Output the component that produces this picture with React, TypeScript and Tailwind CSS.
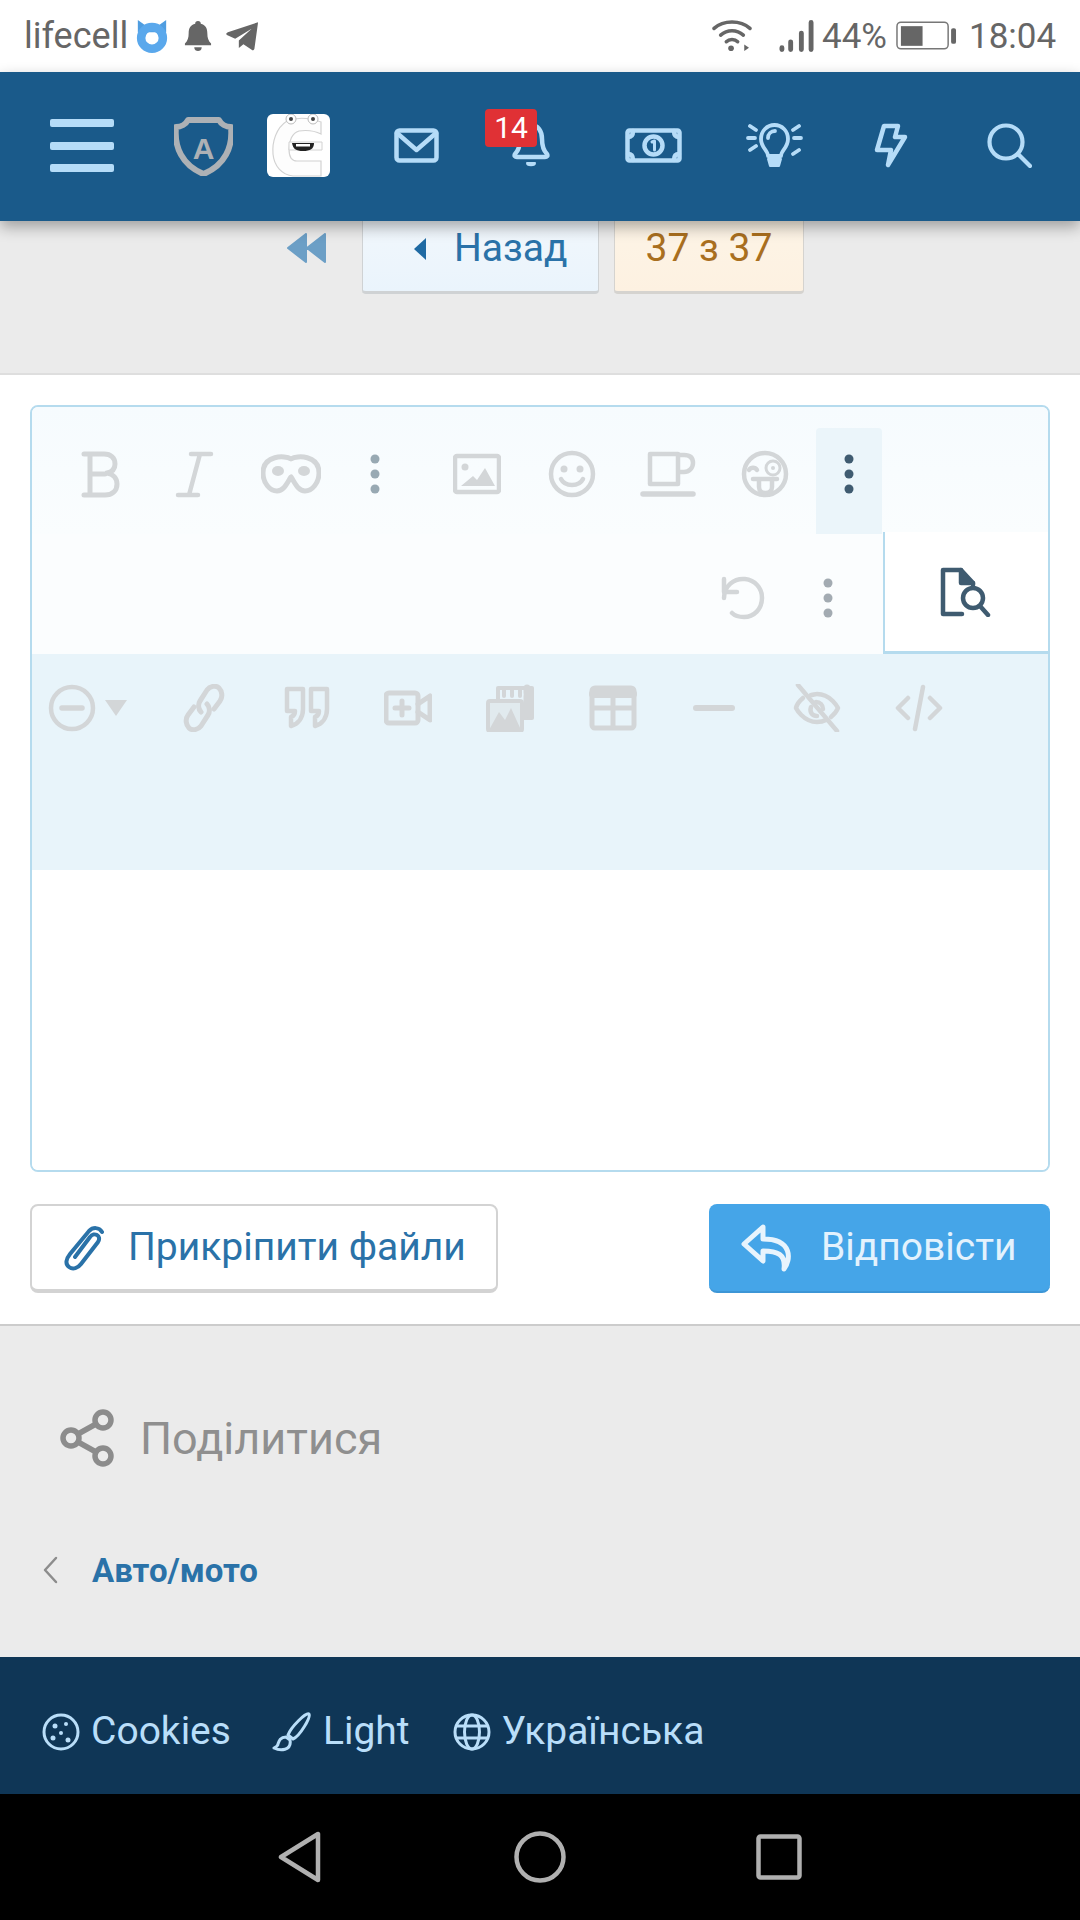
import React from "react";

const G = "#d3d6d8";
const N = "#b5dcf8";

function S({ c = "", v = "0 0 48 48", children, stroke = G, sw = 4 }: { c?: string; v?: string; children: React.ReactNode; stroke?: string; sw?: number }) {
  return (
    <svg className={"shrink-0 " + c} viewBox={v} fill="none" stroke={stroke} strokeWidth={sw} strokeLinecap="round" strokeLinejoin="round">
      {children}
    </svg>
  );
}

function Dots({ c = "", color }: { c?: string; color: string }) {
  return (
    <svg className={"shrink-0 " + c} viewBox="0 0 48 48" fill={color}>
      <circle cx="24" cy="9" r="4.5" />
      <circle cx="24" cy="24" r="4.5" />
      <circle cx="24" cy="39" r="4.5" />
    </svg>
  );
}

const T = "w-[48px] h-[48px] mt-[43px]";
const R = "w-[48px] h-[48px]";

export default function App() {
  return (
    <div className="w-[1080px] h-[1920px] flex flex-col overflow-hidden bg-white font-['Roboto',sans-serif]">
      {/* status bar */}
      <div className="h-[72px] shrink-0 flex items-center bg-white text-[35px] text-[#666]">
        <span className="ml-[24px] w-[104px] text-[36px] leading-none whitespace-nowrap">lifecell</span>
        <svg className="w-[34px] h-[34px] ml-[7px] shrink-0" viewBox="0 0 36 36">
          <path d="M3 1l7 5h16l7-5v13H3z" fill="#4f9de0" />
          <circle cx="18" cy="20" r="11.500" fill="none" stroke="#5aa8ec" strokeWidth="9" />
        </svg>
        <svg className="w-[28px] h-[32px] ml-[15px] shrink-0" viewBox="0 0 30 34" fill="#666">
          <path d="M15 1c2 0 3 1 3 3 5 1 7 5 7 10 0 5 1 8 4 11v2H1v-2c3-3 4-6 4-11 0-5 2-9 7-10 0-2 1-3 3-3z" />
          <path d="M11 29h8c0 3-2 4-4 4s-4-1-4-4z" />
        </svg>
        <svg className="w-[33px] h-[30px] ml-[14px] shrink-0" viewBox="0 0 36 32" fill="#666">
          <path d="M35 1L31 30c-1 2-2 2-3 1l-9-6-5 4v-8L28 8 10 19 1 15c-1-1-1-2 1-3z" />
        </svg>
        <svg className="w-[40px] h-[34px] ml-[453px] shrink-0" viewBox="0 0 42 36" fill="none" stroke="#666" strokeWidth="3.8" strokeLinecap="round">
          <path d="M2 10c10-9 28-9 38 0" />
          <path d="M9 17c7-6 17-6 24 0" />
          <path d="M15 24c3-3 9-3 12 0" />
          <circle cx="20" cy="31" r="3" fill="#666" stroke="none" />
          <path d="M34 27v7l5-3.500z" fill="#666" stroke="none" />
        </svg>
        <svg className="w-[35px] h-[34px] ml-[27px] shrink-0" viewBox="0 0 36 34" fill="none" stroke="#666" strokeWidth="5" strokeLinecap="round">
          <path d="M3 29v2M12 23v8M23 14v17M33 3v28" />
        </svg>
        <span className="ml-[8px] w-[66px] leading-none">44%</span>
        <svg className="w-[61px] h-[30px] ml-[8px] shrink-0" viewBox="0 0 62 30">
          <rect x="1" y="1" width="52" height="27" rx="4" fill="none" stroke="#777" strokeWidth="1.500" />
          <rect x="5" y="5" width="22" height="20" fill="#666" />
          <rect x="56" y="7" width="5" height="16" rx="2" fill="#666" />
        </svg>
        <span className="ml-[12px] leading-none">18:04</span>
      </div>

      {/* nav */}
      <div className="h-[149px] shrink-0 bg-[#1a5a8a] relative z-10 shadow-[0_6px_14px_rgba(0,0,0,0.32)] flex items-start">
        <div className="ml-[50px] mt-[47px] w-[64px] h-[53px] flex flex-col justify-between">
          <div className="h-[8px] rounded-[2px] bg-[#b5dcf8]" />
          <div className="h-[8px] rounded-[2px] bg-[#b5dcf8]" />
          <div className="h-[8px] rounded-[2px] bg-[#b5dcf8]" />
        </div>
        <svg className="ml-[60px] mt-[45px] w-[59px] h-[59px] shrink-0" viewBox="0 0 59 59">
          <path d="M14 3h31c2 4 7 7 12 7 2 20-6 38-27.500 47C8 48 0 30 2 10c5 0 10-3 12-7z" fill="none" stroke="#adb1b5" strokeWidth="6" strokeLinejoin="round" />
          <text x="29.500" y="42" textAnchor="middle" fontSize="30" fontWeight="900" fontFamily="Liberation Sans, sans-serif" fill="#adb1b5">A</text>
        </svg>
        <div className="ml-[34px] mt-[42px] w-[63px] h-[63px] rounded-[6px] bg-white overflow-hidden shrink-0">
          <svg viewBox="0 0 63 63" className="w-full h-full">
            <path d="M20 7C9 14 5 28 6 40c1 12 9 21 20 22h28V47H30c-6 0-8-5-8-12 0-8 3-16 10-18 7-1 16 0 22 3V8C43 4 30 3 20 7z" fill="#fdfdfd" stroke="#d2d2d2" strokeWidth="1.200" />
            <path d="M22 28h33v8H22z" fill="#fdfdfd" stroke="#d2d2d2" strokeWidth="1" />
            <circle cx="24" cy="5" r="5" fill="#fff" stroke="#bbb" />
            <circle cx="24" cy="5" r="2" fill="#444" />
            <circle cx="46" cy="5" r="5" fill="#fff" stroke="#bbb" />
            <circle cx="46" cy="5" r="2" fill="#444" />
            <path d="M25 29h22c0 6-4 8-11 8s-10-2-11-8z" fill="#222" />
            <path d="M29 30h14v2.500H29z" fill="#fff" />
          </svg>
        </div>
        <S c="ml-[64px] mt-[56px] w-[45px] h-[35px]" v="0 0 45 35" stroke={N} sw={4.500}>
          <rect x="2.500" y="2.500" width="40" height="30" rx="3" />
          <path d="M3 5l19.500 17L42 5" />
        </S>
        <div className="ml-[73px] mt-[50px] relative w-[38px] h-[46px] shrink-0">
          <S c="absolute left-0 top-0 w-[38px] h-[46px]" v="0 0 38 46" stroke={N} sw={4.500}>
            <path d="M19 3c7 0 11 6 11 14 0 8 2 12 5 15 1 2 0 3-2 3H5c-2 0-3-1-2-3 3-3 5-7 5-15 0-8 4-14 11-14z" />
            <path d="M15 41h8c0 3-8 3-8 0z" fill={N} strokeWidth="2" />
          </S>
          <div className="absolute left-[-27px] top-[-13px] w-[52px] h-[38px] rounded-[4px] bg-[#e03135] text-white text-[30px] leading-[38px] text-center">14</div>
        </div>
        <S c="ml-[75px] mt-[56px] w-[57px] h-[35px]" v="0 0 57 35" stroke={N} sw={4.500}>
          <rect x="2.500" y="2.500" width="52" height="30" rx="2" />
          <path d="M3 9c3 0 5-2 5-6M54 9c-3 0-5-2-5-6M3 26c3 0 5 2 5 6M54 26c-3 0-5 2-5 6" />
          <circle cx="28.500" cy="17.500" r="9" />
          <path d="M27 14l2.500-1v9" strokeWidth="3" />
        </S>
        <S c="ml-[64px] mt-[51px] w-[57px] h-[45px]" v="0 0 57 45" stroke={N} sw={3.800}>
          <path d="M22 33c0-6-7-8-7-17 0-8 6-14 13.500-14S42 8 42 16c0 9-7 11-7 17z" />
          <path d="M22 15c0-4 3-7 7-7" />
          <path d="M22 36h13l-2 7h-9z" fill={N} strokeWidth="2" />
          <path d="M2 15h7M48 15h7M4 3l6 4M53 3l-6 4M4 27l6-4M53 27l-6 4" />
        </S>
        <S c="ml-[71px] mt-[51px] w-[34px] h-[45px]" v="0 0 34 45" stroke={N} sw={4.500}>
          <path d="M10 3h14l-3 11h10L14 42l3-15H3z" />
        </S>
        <S c="ml-[79px] mt-[51px] w-[45px] h-[45px]" v="0 0 45 45" stroke={N} sw={4.200}>
          <circle cx="19" cy="19" r="16.500" />
          <path d="M31 31l12 12" />
        </S>
      </div>

      {/* pagination */}
      <div className="h-[152px] shrink-0 bg-[#ebebeb] flex items-start">
        <svg className="ml-[286px] mt-[12px] w-[40px] h-[30px] shrink-0" viewBox="0 0 40 30" fill="#6c9fc6">
          <path d="M20 1v28L2 15zM39 1v28L21 15z" strokeLinejoin="round" stroke="#6c9fc6" strokeWidth="2" />
        </svg>
        <div className="ml-[36px] w-[237px] h-[73px] pb-[15px] flex items-center rounded-b-[4px] border-x border-b-[3px] border-[#cfd2d4] bg-gradient-to-b from-[#f1f7fc] to-[#eaf4fc] text-[#2a72a8] text-[39px]">
          <svg className="ml-[51px] w-[12px] h-[22px] shrink-0" viewBox="0 0 12 22" fill="#1f6aa3"><path d="M12 0v22L0 11z" /></svg>
          <span className="ml-[28px] leading-none">Назад</span>
        </div>
        <div className="ml-[15px] w-[190px] h-[73px] pb-[15px] flex items-center justify-center rounded-b-[4px] border-x border-b-[3px] border-[#d5d3cf] bg-gradient-to-b from-[#fdf4e6] to-[#fdf1e1] text-[#a96f1f] text-[39px] leading-none whitespace-nowrap">37 з 37</div>
      </div>

      {/* reply */}
      <div className="h-[953px] shrink-0 bg-white border-t-2 border-[#dedede] border-b-2 border-b-[#cccccc] px-[30px] pt-[30px] flex flex-col">
        <div className="h-[767px] shrink-0 rounded-[8px] border-2 border-[#b5dbee] overflow-hidden flex flex-col bg-white">
          <div className="h-[127px] shrink-0 flex items-start bg-gradient-to-b from-[#f6fbfe] to-[#fafdfe]">
            <S c={"ml-[44px] " + T} sw={5}>
              <path d="M8 4h20c7 0 11 4 11 10 0 5-3 8-8 9 6 1 10 5 10 11 0 7-5 11-12 11H8M14 4v41M14 24h15" />
            </S>
            <S c={"ml-[46px] " + T} sw={4.500}>
              <path d="M21 4h20M8 45h20M30 4L19 45" />
            </S>
            <S c="ml-[43px] mt-[43px] w-[60px] h-[48px]" v="0 0 60 48" sw={5}>
              <path d="M30 9c6-4 28-4 28 14 0 10-7 18-14 18-7 0-10-8-14-14-4 6-7 14-14 14C9 41 2 33 2 23 2 5 24 5 30 9z" />
              <ellipse cx="17" cy="21" rx="6" ry="5" fill={G} stroke="none" />
              <ellipse cx="43" cy="21" rx="6" ry="5" fill={G} stroke="none" />
            </S>
            <Dots c={"ml-[30px] " + T} color="#98a9b3" />
            <S c={"ml-[54px] " + T} sw={4.500}>
              <rect x="2" y="6" width="44" height="36" rx="2" />
              <circle cx="12" cy="17" r="3.500" fill={G} stroke="none" />
              <path d="M8 36l12-10 4 4 8-12 10 18z" fill={G} stroke="none" />
            </S>
            <S c={"ml-[47px] " + T} sw={4.500}>
              <circle cx="24" cy="24" r="21" />
              <circle cx="16" cy="19" r="3.500" fill={G} stroke="none" />
              <circle cx="32" cy="19" r="3.500" fill={G} stroke="none" />
              <path d="M13 29c4 8 18 8 22 0" />
            </S>
            <S c="ml-[44px] mt-[43px] w-[56px] h-[48px]" v="0 0 56 48" sw={4.500}>
              <path d="M10 4h28v30H10zM38 5h6c6 0 9 3 9 8s-4 9-9 9h-6" />
              <path d="M3 44h50" strokeWidth="5.500" />
            </S>
            <S c={"ml-[45px] " + T} sw={4.500}>
              <circle cx="24" cy="24" r="21" />
              <path d="M8 20c2-3 6-3 8 0" />
              <circle cx="32" cy="18" r="7" strokeWidth="3" />
              <circle cx="32" cy="18" r="2" fill={G} stroke="none" />
              <path d="M12 29h24M18 29v8c0 8 13 8 13 0v-8" />
            </S>
            <div className="ml-[27px] mt-[21px] w-[66px] h-[106px] bg-[#ebf5fa] rounded-t-[4px] flex justify-center pt-[22px]">
              <Dots c={R} color="#3f5b70" />
            </div>
          </div>
          <div className="h-[120px] shrink-0 flex items-start bg-[#fbfdfe]">
            <S c="ml-[687px] mt-[40px] w-[48px] h-[48px]" sw={4.500}>
              <path d="M5 24C5 12 15 4 26 5c10 1 17 9 17 19 0 11-8 19-18 19-5 0-9-1-12-4" />
              <path d="M5 5v13h13" />
            </S>
            <Dots c={"ml-[37px] mt-[40px] " + R} color="#a3abb2" />
            <div className="ml-[31px] w-[166px] h-[122px] -mt-[2px] bg-white border-l-2 border-b-[3px] border-[#b5dbee] flex items-center justify-center shrink-0">
              <S c="w-[54px] h-[50px]" v="0 0 54 50" stroke="#3f5b70" sw={4.500}>
                <path d="M22 47H3V3h18l12 13v2" />
                <path d="M21 3v13h12" fill="#3f5b70" />
                <circle cx="33" cy="31" r="10" />
                <path d="M40 39l8 9" />
              </S>
            </div>
          </div>
          <div className="h-[216px] shrink-0 flex items-start bg-[#e8f4fa] pt-[30px]">
            <S c={R + " ml-[16px]"} sw={4.500}>
              <circle cx="24" cy="24" r="21" />
              <path d="M14 24h20" strokeWidth="5.500" />
            </S>
            <svg className="ml-[9px] mt-[16px] w-[22px] h-[16px] shrink-0" viewBox="0 0 22 16" fill={G}><path d="M0 0h22L11 16z" /></svg>
            <S c={R + " ml-[53px]"} sw={5}>
              <path d="M21 28c-3-3-3-8-1-11l7-11c3-4 9-5 12-2s4 9 1 13l-6 8" />
              <path d="M27 20c3 3 3 8 1 11l-7 11c-3 4-9 5-12 2s-4-9-1-13l6-8" />
            </S>
            <S c={R + " ml-[55px]"} sw={4.500}>
              <path d="M4 5h16v20c0 9-5 15-12 17v-9c3-1 4-4 4-6H4zM28 5h16v20c0 9-5 15-12 17v-9c3-1 4-4 4-6h-8z" />
            </S>
            <S c={R + " ml-[53px] "} sw={5}>
              <rect x="2" y="9" width="32" height="30" rx="3" />
              <path d="M34 20l12-8v24l-12-8M18 17v14M11 24h14" />
            </S>
            <S c={R + " ml-[54px]"} sw={4}>
              <path d="M12 16V4h34v30h-8M18 4v8M26 4v8M34 4v8" />
              <path d="M41 4v26" strokeWidth="7" strokeDasharray="5 3" />
              <rect x="2" y="17" width="34" height="30" rx="2" fill={G} fillOpacity="0.35" />
              <path d="M3 46l10-18 6 8 6-12 10 22z" fill={G} stroke="none" />
            </S>
            <S c={R + " ml-[55px]"} sw={5}>
              <rect x="3" y="4" width="42" height="40" rx="3" />
              <path d="M24 6v36M4 24h40" />
              <path d="M4 10h40" strokeWidth="8" />
            </S>
            <S c={R + " ml-[53px]"} sw={6}>
              <path d="M6 24h36" />
            </S>
            <S c={R + " ml-[55px]"} sw={4.500}>
              <path d="M10 14C4 19 3 24 3 24s7 14 21 14c4 0 7-1 9-2M18 11c2 0 4-1 6-1 14 0 21 14 21 14s-2 5-7 9" />
              <path d="M18 23c-2 6 2 9 6 9M30 25c0-4-3-7-7-7" />
              <path d="M5 1l39 46" />
            </S>
            <S c={R + " ml-[54px]"} sw={4.500}>
              <path d="M13 14L3 24l10 10M35 14l10 10-10 10M28 3l-8 42" />
            </S>
          </div>
          <div className="flex-1 bg-white" />
        </div>
        <div className="mt-[32px] flex justify-between">
          <div className="w-[468px] h-[89px] bg-white rounded-[8px] border-2 border-b-[4px] border-[#d3d3d3] flex items-center text-[#2a72a8] text-[39px]">
            <svg className="ml-[32px] w-[44px] h-[48px] shrink-0" viewBox="0 0 44 48" fill="none" stroke="#2a72a8" strokeWidth="4" strokeLinecap="round">
              <path d="M38 8c-3-5-9-5-13-1L6 30c-4 5-5 10-1 13s9 1 12-3l17-22c2-3 1-6-1-7s-5-1-7 2L11 33" />
            </svg>
            <span className="ml-[20px] leading-none whitespace-nowrap">Прикріпити файли</span>
          </div>
          <div className="w-[341px] h-[89px] bg-[#45a5e8] rounded-[8px] border-b-2 border-[#3d96d6] flex items-center text-[#e3f2fd] text-[39px]">
            <svg className="ml-[32px] w-[54px] h-[48px] shrink-0" viewBox="0 0 54 48" fill="none" stroke="#e8f4fd" strokeWidth="5" strokeLinejoin="round" strokeLinecap="round">
              <path d="M22 3L3 20l19 17v-10c14 0 23 3 21 18 7-9 9-30-21-30z" />
            </svg>
            <span className="ml-[26px] leading-none">Відповісти</span>
          </div>
        </div>
      </div>

      {/* share + breadcrumb */}
      <div className="h-[331px] shrink-0 bg-[#ebebeb] flex flex-col">
        <div className="mt-[80px] h-[64px] flex items-center text-[#8f8f8f] text-[45px]">
          <svg className="ml-[60px] w-[54px] h-[60px] shrink-0" viewBox="0 0 54 60" fill="none" stroke="#8c8c8c" strokeWidth="5.500">
            <circle cx="43" cy="12" r="8" />
            <circle cx="11" cy="30" r="8" />
            <circle cx="43" cy="48" r="8" />
            <path d="M18 26l18-10M18 34l18 10" />
          </svg>
          <span className="ml-[26px] leading-none">Поділитися</span>
        </div>
        <div className="mt-[80px] h-[40px] flex items-center">
          <svg className="ml-[42px] w-[16px] h-[28px] shrink-0" viewBox="0 0 16 28" fill="none" stroke="#8c8c8c" strokeWidth="2.500" strokeLinecap="round" strokeLinejoin="round">
            <path d="M14 2L3 14l11 12" />
          </svg>
          <span className="ml-[34px] text-[33px] font-bold text-[#2a72a8] leading-none">Авто/мото</span>
        </div>
      </div>

      {/* footer */}
      <div className="h-[137px] shrink-0 bg-[#0f3656] pt-[12px] flex items-center text-[#b9def9] text-[39px]">
        <svg className="ml-[42px] w-[38px] h-[38px] shrink-0" viewBox="0 0 38 38" fill="#b9def9">
          <circle cx="19" cy="19" r="17" fill="none" stroke="#b9def9" strokeWidth="3" />
          <circle cx="13" cy="13" r="2.500" />
          <circle cx="24" cy="11" r="2" />
          <circle cx="19" cy="20" r="2" />
          <circle cx="11" cy="25" r="2.500" />
          <circle cx="26" cy="27" r="2.500" />
        </svg>
        <span className="ml-[11px] leading-none">Cookies</span>
        <svg className="ml-[41px] w-[40px] h-[40px] shrink-0" viewBox="0 0 40 40" fill="none" stroke="#b9def9" strokeWidth="3" strokeLinejoin="round">
          <path d="M37 2c2 3-9 22-16 25l-5-4C19 15 34 0 37 2z" />
          <path d="M14 25c-6 0-7 4-8 7 0 2-2 3-4 4 6 3 18 3 16-8z" />
        </svg>
        <span className="ml-[11px] leading-none">Light</span>
        <svg className="ml-[43px] w-[38px] h-[38px] shrink-0" viewBox="0 0 38 38" fill="none" stroke="#b9def9" strokeWidth="3">
          <circle cx="19" cy="19" r="17" />
          <ellipse cx="19" cy="19" rx="7.500" ry="17" />
          <path d="M3 13h32M3 25h32" />
        </svg>
        <span className="ml-[11px] leading-none">Українська</span>
      </div>

      {/* android nav */}
      <div className="flex-1 bg-black flex items-center">
        <svg className="ml-[278px] w-[44px] h-[52px] shrink-0" viewBox="0 0 44 52" fill="none" stroke="#b0b0b0" strokeWidth="4.500" strokeLinejoin="round">
          <path d="M40 3v46L3 26z" />
        </svg>
        <svg className="ml-[192px] w-[52px] h-[52px] shrink-0" viewBox="0 0 52 52" fill="none" stroke="#b0b0b0" strokeWidth="4.500">
          <circle cx="26" cy="26" r="23.500" />
        </svg>
        <svg className="ml-[190px] w-[46px] h-[46px] shrink-0" viewBox="0 0 46 46" fill="none" stroke="#b0b0b0" strokeWidth="4.500" strokeLinejoin="round">
          <rect x="2.500" y="2.500" width="41" height="41" rx="2" />
        </svg>
      </div>
    </div>
  );
}
